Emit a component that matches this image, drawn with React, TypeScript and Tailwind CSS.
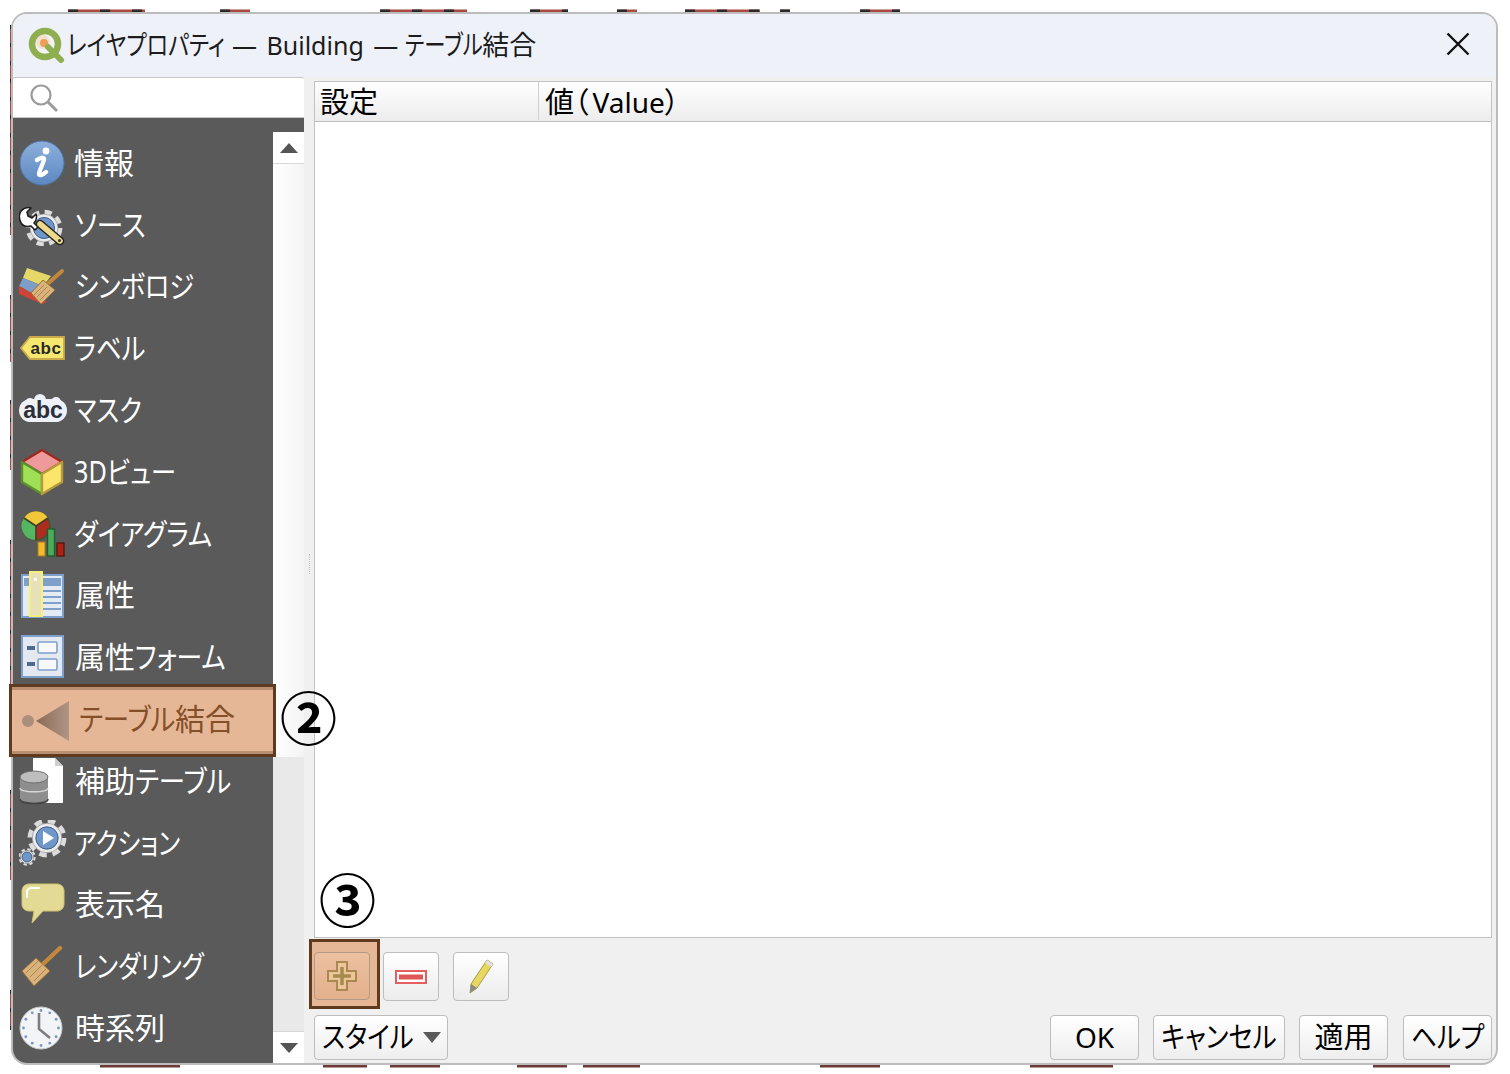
import React from "react";

function K({ w, s, children }: { w: string; s: string; children: React.ReactNode }) {
  return (
    <span className={`inline-block ${w}`}>
      <span className={`inline-block origin-left whitespace-nowrap ${s}`}>{children}</span>
    </span>
  );
}

const Info = () => (
  <svg width="46" height="46" viewBox="0 0 46 46">
    <defs>
      <linearGradient id="ig" x1="0" y1="0" x2="0" y2="1"><stop offset="0" stopColor="#8db0dc" /><stop offset="1" stopColor="#5c88c0" /></linearGradient>
    </defs>
    <circle cx="23" cy="23" r="22" fill="url(#ig)" stroke="#4f75a8" />
    <circle cx="27" cy="11" r="3.4" fill="#fff" />
    <path d="M18 20c3-2.5 7-3 7-1 0 3-5 12-5 15 0 2 4 1 7-2" fill="none" stroke="#fff" strokeWidth="4.4" strokeLinecap="round" />
  </svg>
);

const Gear = ({ cx, cy, r }: { cx: number; cy: number; r: number }) => (
  <g>
    <circle cx={cx} cy={cy} r={r * 0.94} fill="none" stroke="#dcdcdc" strokeWidth={r * 0.28} strokeDasharray={`${r * 0.42} ${r * 0.32}`} />
    <circle cx={cx} cy={cy} r={r * 0.82} fill="#ececec" stroke="#8a8a8a" strokeWidth="0.6" />
    <circle cx={cx} cy={cy} r={r * 0.62} fill="#6f97c9" stroke="#3f5f88" strokeWidth="1" />
  </g>
);

const Source = () => (
  <svg width="46" height="40" viewBox="0 0 46 40">
    <Gear cx={25} cy={22} r={17} />
    <path d="M2 5c3-3 7-4 10-3l-4 4 1 4 4 2 4-4c1 3 0 7-2 9l4 4-3 3-4-4C8 21 4 20 2 17 0 13 0 8 2 5z" fill="#fff" stroke="#1e1e1e" strokeWidth="1.6" strokeLinejoin="round" />
    <path d="M21 18l20 17" stroke="#222" strokeWidth="8.4" strokeLinecap="round" />
    <path d="M21 18l20 17" stroke="#ecd98a" strokeWidth="5.6" strokeLinecap="round" />
    <circle cx="40.5" cy="34.5" r="1.5" fill="#333" />
  </svg>
);

const Symbology = () => (
  <svg width="46" height="40" viewBox="0 0 46 40">
    <path d="M8 0l24 8-8 10L4 10z" fill="#e6d868" />
    <path d="M4 10l20 8-6 10L0 18z" fill="#7c9ec9" />
    <path d="M0 18l18 10 10 6-5 2L0 26z" fill="#cf4437" />
    <path d="M24 20L43 3" stroke="#c2883d" strokeWidth="4" strokeLinecap="round" />
    <path d="M12 25l12-13 12 10-14 14z" fill="#d9b27c" stroke="#9a7136" strokeWidth="1" />
    <path d="M15 27l10-10M18 29l10-10M21 32l10-10" stroke="#aa8450" strokeWidth="1" />
  </svg>
);

const LabelIcon = () => (
  <svg width="46" height="26" viewBox="0 0 46 26">
    <path d="M1 13L10 2h34v22H10z" fill="#f6e86e" stroke="#c9a94a" strokeWidth="1.8" />
    <text x="26" y="19" textAnchor="middle" fontSize="17" fontWeight="700" letterSpacing=".6" fill="#2a2a2a" fontFamily="'Liberation Sans',sans-serif">abc</text>
  </svg>
);

const MaskIcon = () => (
  <svg width="50" height="30" viewBox="0 0 50 30">
    <rect x="1" y="5" width="48" height="23" rx="11.5" fill="#eef1f8" />
    <circle cx="22" cy="6" r="6" fill="#eef1f8" />
    <circle cx="12" cy="8" r="4" fill="#eef1f8" />
    <circle cx="38" cy="8" r="5" fill="#eef1f8" />
    <text x="25" y="24" textAnchor="middle" fontSize="23" fontWeight="700" fill="#2a2f38" fontFamily="'Liberation Sans',sans-serif">abc</text>
  </svg>
);

const Cube = () => (
  <svg width="44" height="48" viewBox="0 0 44 48">
    <path d="M22 2l20 12-20 12L2 14z" fill="#ee9a9a" stroke="#9c2a20" strokeWidth="2.4" strokeLinejoin="round" />
    <path d="M2 14l20 12v20L2 34z" fill="#9fe056" stroke="#5f8f2c" strokeWidth="2.4" strokeLinejoin="round" />
    <path d="M42 14L22 26v20l20-12z" fill="#fbe66b" stroke="#b79a3a" strokeWidth="2.4" strokeLinejoin="round" />
  </svg>
);

const Diagram = () => (
  <svg width="44" height="46" viewBox="0 0 44 46">
    <circle cx="15" cy="15" r="14" fill="#ad2b1f" stroke="#3f5a2c" strokeWidth="1.6" />
    <path d="M15 15L3 7A14 14 0 0 1 27 7z" fill="#f2c83a" />
    <path d="M15 15L3 7A14 14 0 0 0 15 29z" fill="#55b561" />
    <path d="M15 15V29M15 15L3 7M15 15L27 7" stroke="#3f3f26" strokeWidth="1.6" />
    <rect x="17" y="31" width="7" height="14" fill="#f5b92e" stroke="#a67c1c" />
    <rect x="26.5" y="18" width="7" height="27" fill="#4dab5c" stroke="#1f5e2c" strokeWidth="1.4" />
    <rect x="36" y="32" width="7" height="13" fill="#a9221a" stroke="#5c1610" strokeWidth="1.4" />
  </svg>
);

const Attrs = () => (
  <svg width="44" height="48" viewBox="0 0 44 48">
    <rect x="1" y="4" width="41" height="42" fill="#e4ebf5" stroke="#7da0cc" strokeWidth="2" />
    <rect x="3" y="7" width="37" height="8" fill="#7f9fc9" />
    <path d="M16 20h24M16 26h24M16 32h24M16 38h24" stroke="#7f9fc9" strokeWidth="2" />
    <rect x="9" y="1" width="12" height="44" fill="#e8e0b8" stroke="#f6f07a" strokeWidth="2" />
    <rect x="13" y="7" width="3" height="3" fill="#fff" />
  </svg>
);

const Form = () => (
  <svg width="44" height="44" viewBox="0 0 44 44">
    <rect x="1" y="1" width="41" height="41" fill="#e4e9f1" stroke="#7da0cc" strokeWidth="2" />
    <rect x="6" y="11" width="8" height="4" fill="#4d6a93" />
    <rect x="6" y="27" width="8" height="4" fill="#4d6a93" />
    <rect x="17" y="7" width="19" height="11" rx="1.5" fill="#f6f8fb" stroke="#7da0cc" strokeWidth="1.6" />
    <rect x="17" y="24" width="19" height="11" rx="1.5" fill="#f6f8fb" stroke="#7da0cc" strokeWidth="1.6" />
  </svg>
);

const JoinIcon = () => (
  <svg width="50" height="44" viewBox="0 0 50 44">
    <defs>
      <linearGradient id="jg" x1="0" y1="0" x2="1" y2="0"><stop offset="0" stopColor="#8a6a58" /><stop offset="1" stopColor="#b09585" /></linearGradient>
    </defs>
    <circle cx="6" cy="22" r="6" fill="#ac8e7c" />
    <path d="M14 22L47 2v40z" fill="url(#jg)" />
  </svg>
);

const Aux = () => (
  <svg width="46" height="48" viewBox="0 0 46 48">
    <path d="M14 1h22l8 8v37H14z" fill="#fff" />
    <path d="M36 1l8 8h-8z" fill="#cfcfcf" />
    <path d="M1 20v22c0 6 28 6 28 0V20z" fill="#8e8e8e" />
    <path d="M1 31c0 5 28 5 28 0" fill="none" stroke="#d5d5d5" strokeWidth="1.4" />
    <ellipse cx="15" cy="20" rx="14" ry="6" fill="#bdbdbd" stroke="#6e6e6e" />
    <path d="M1 42c0 6 28 6 28 0" fill="none" stroke="#444" strokeWidth="1.6" />
  </svg>
);

const ActionIcon = () => (
  <svg width="48" height="46" viewBox="0 0 48 46">
    <Gear cx={28} cy={18} r={18} />
    <path d="M24 11l11 7-11 7z" fill="#fff" />
    <Gear cx={8} cy={37} r={8} />
  </svg>
);

const Bubble = () => (
  <svg width="44" height="42" viewBox="0 0 44 42">
    <path d="M8 1h28c4 0 7 3 7 7v13c0 4-3 7-7 7H22L11 40l2-12H8c-4 0-7-3-7-7V8c0-4 3-7 7-7z" fill="#e3da95" stroke="#cfc36d" />
    <path d="M6 14V9c0-2 2-4 4-4h8" fill="none" stroke="#fff" strokeWidth="2" strokeLinecap="round" />
  </svg>
);

const Brush = () => (
  <svg width="42" height="42" viewBox="0 0 42 42">
    <path d="M20 21L39 3" stroke="#c2883d" strokeWidth="4.4" strokeLinecap="round" />
    <path d="M1 26l14-13 14 13-16 15z" fill="#d9b27c" stroke="#9a7136" strokeWidth="1" />
    <path d="M5 28l12-12M9 32l12-12M13 36l12-12" stroke="#aa8450" strokeWidth="1" />
  </svg>
);

const Clock = () => {
  const ticks = Array.from({ length: 12 }, (_, i) => i * 30);
  return (
    <svg width="44" height="44" viewBox="0 0 44 44">
      <circle cx="22" cy="22" r="21" fill="#f2f4f8" stroke="#c8c8c8" />
      {ticks.map((a) => (
        <circle
          key={a}
          cx={22 + 17.5 * Math.sin((a * Math.PI) / 180)}
          cy={22 - 17.5 * Math.cos((a * Math.PI) / 180)}
          r="1.4"
          fill="#7b97bf"
        />
      ))}
      <path d="M20 7v16l11 9" fill="none" stroke="#7d7d7d" strokeWidth="2.6" />
    </svg>
  );
};

const Logo = () => (
  <svg width="38" height="36" viewBox="0 0 38 36">
    <circle cx="17" cy="17" r="13" fill="#f1f4f6" stroke="#8fae4f" strokeWidth="6.5" />
    <circle cx="15" cy="15" r="7" fill="#f6c9a0" opacity=".45" />
    <circle cx="16" cy="16" r="4" fill="#ef9f55" />
    <path d="M20 20L33 33" stroke="#8fae4f" strokeWidth="6" strokeLinecap="round" />
  </svg>
);

type R = { key: string; label: React.ReactNode; icon: React.ReactNode; pl: string; gap: string };

const rows: R[] = [
  { key: "a", label: "情報", icon: <Info />, pl: "pl-[6px]", gap: "w-[55px]" },
  { key: "b", label: <K w="w-[70px]" s="scale-x-[.886]">ソース</K>, icon: <Source />, pl: "pl-[6px]", gap: "w-[56px] pt-[2px]" },
  { key: "c", label: <K w="w-[119px]" s="scale-x-[.838]">シンボロジ</K>, icon: <Symbology />, pl: "pl-[6px]", gap: "w-[56px] pt-[3px]" },
  { key: "d", label: <K w="w-[70px]" s="scale-x-[.843]">ラベル</K>, icon: <LabelIcon />, pl: "pl-[7px]", gap: "w-[54px]" },
  { key: "e", label: <K w="w-[67px]" s="scale-x-[.84]">マスク</K>, icon: <MaskIcon />, pl: "pl-[5px]", gap: "w-[56px] pb-[3px]" },
  { key: "f", label: <K w="w-[100px]" s="scale-x-[.84]">3Dビュー</K>, icon: <Cube />, pl: "pl-[7px]", gap: "w-[54px]" },
  { key: "g", label: <K w="w-[137px]" s="scale-x-[.86]">ダイアグラム</K>, icon: <Diagram />, pl: "pl-[8px]", gap: "w-[53px]" },
  { key: "h", label: "属性", icon: <Attrs />, pl: "pl-[8px]", gap: "w-[54px]" },
  { key: "i", label: <>属性<K w="w-[91px]" s="scale-x-[.86]">フォーム</K></>, icon: <Form />, pl: "pl-[8px]", gap: "w-[54px]" },
];
const rows2: R[] = [
  { key: "j", label: <>補助<K w="w-[96px]" s="scale-x-[.88]">テーブル</K></>, icon: <Aux />, pl: "pl-[6px]", gap: "w-[56px]" },
  { key: "k", label: <K w="w-[106px]" s="scale-x-[.815]">アクション</K>, icon: <ActionIcon />, pl: "pl-[6px]", gap: "w-[55px]" },
  { key: "l", label: "表示名", icon: <Bubble />, pl: "pl-[8px]", gap: "w-[54px]" },
  { key: "m", label: <K w="w-[130px]" s="scale-x-[.81]">レンダリング</K>, icon: <Brush />, pl: "pl-[8px]", gap: "w-[54px]" },
  { key: "n", label: "時系列", icon: <Clock />, pl: "pl-[6px]", gap: "w-[56px]" },
];

function Row({ r }: { r: R }) {
  return (
    <div className={`flex h-[61.8px] items-center ${r.pl}`}>
      <div className={`flex shrink-0 items-center ${r.gap}`}>{r.icon}</div>
      <span className="whitespace-nowrap text-[30px] leading-none text-white">{r.label}</span>
    </div>
  );
}

function Btn({ children, w }: { children: React.ReactNode; w: string }) {
  return (
    <div className={`flex h-[45px] ${w} items-center justify-center rounded-[4px] border border-[#bdbdbd] bg-gradient-to-b from-white to-[#eeeeee] pb-[2px] text-[29px] leading-none text-black`}>
      {children}
    </div>
  );
}

function ToolBtn({ children }: { children: React.ReactNode }) {
  return (
    <div className="flex h-[49px] w-[56px] items-center justify-center rounded-[4px] border border-[#bdbdbd] bg-gradient-to-b from-white to-[#ececec]">
      {children}
    </div>
  );
}

const red = "M40 11H40M68 11H145M220 11H250M380 11H467M530 11H568M617 11H637M685 11H760M780 11H790M860 11H900";

export default function App() {
  return (
    <div className="relative h-[1074px] w-[1510px] overflow-hidden bg-white pl-[11px] pt-[12px] font-['Noto_Sans','Noto_Sans_CJK_JP',sans-serif] [font-feature-settings:'palt']">
      <svg className="absolute left-0 top-0" width="1510" height="1074" viewBox="0 0 1510 1074">
        <g fill="none" strokeWidth="3">
          <path d="M11.5 25V235M11.5 295V362M11.5 400V470M11.5 540V700M11.5 790V880M11.5 990V1030" stroke="#a84a42" />
          <path d="M11.5 25V235M11.5 295V362M11.5 400V470M11.5 540V700M11.5 790V880M11.5 990V1030" stroke="#2a2a2a" strokeDasharray="4 14" />
          <path d={red} stroke="#a84a42" />
          <path d={red} stroke="#2a2a2a" strokeDasharray="10 22" />
          <path d="M100 1066H180M323 1066H367M390 1066H440M517 1066H567M583 1066H640M820 1066H880M1030 1066H1113M1373 1066H1450" stroke="#6d3a36" />
        </g>
      </svg>
      <div className="relative flex h-[1053px] w-[1487px] flex-col rounded-[16px] border-2 border-[#bcbcbc] bg-[#f0f0f0]">
        <div className="flex h-[63px] shrink-0 items-center rounded-t-[14px] bg-[#eef2f8] pb-[2px] pl-[15px] pr-[26px] text-[27px] leading-none text-[#1c1c1c]">
          <Logo />
          <span className="ml-[1px] whitespace-nowrap">
            <K w="w-[158px]" s="scale-x-[.82]">レイヤプロパティ</K>
            <span className="mx-[7px] text-[25px] [word-spacing:3px]">— Building —</span>
            <K w="w-[77px]" s="scale-x-[.79]">テーブル</K>結合
          </span>
          <svg className="mb-[2px] ml-auto" width="24" height="24" viewBox="0 0 24 24">
            <path d="M1.5 1.5L22.5 22.5M22.5 1.5L1.5 22.5" stroke="#111" strokeWidth="2.4" />
          </svg>
        </div>
        <div className="flex min-h-0 flex-1">
          <div className="flex w-[291px] shrink-0 flex-col">
            <div className="flex h-[41px] shrink-0 items-center rounded-t-[2px] border-y border-[#c6c6c6] bg-white pl-[16px]">
              <svg width="30" height="30" viewBox="0 0 30 30">
                <circle cx="12" cy="12" r="9.5" fill="none" stroke="#9a9a9a" strokeWidth="2.2" />
                <path d="M19 19l9 9" stroke="#9a9a9a" strokeWidth="3" />
              </svg>
            </div>
            <div className="h-[14px] shrink-0 bg-[#5a5a5a]" />
            <div className="flex min-h-0 flex-1">
              <div className="relative w-[260px] shrink-0 rounded-bl-[14px] bg-[#5a5a5a]">
                {rows.map((r) => (
                  <Row key={r.key} r={r} />
                ))}
                <div className="relative h-[61.8px]">
                  <div className="absolute bottom-[-7px] left-[-4px] right-[-3px] top-[-4px] z-10 flex items-center border-[3px] border-[#5f3a1e] bg-[#e6b796] pl-[10px] shadow-[inset_0_3px_0_#b98f70,inset_0_-3px_0_#b98f70]">
                    <JoinIcon />
                    <span className="mb-[3px] ml-[7px] whitespace-nowrap text-[30px] leading-none text-[#835029]">
                      <K w="w-[96px]" s="scale-x-[.88]">テーブル</K>結合
                    </span>
                  </div>
                </div>
                {rows2.map((r) => (
                  <Row key={r.key} r={r} />
                ))}
              </div>
              <div className="flex w-[31px] shrink-0 flex-col bg-[#e9e9e9]">
                <div className="flex h-[32px] shrink-0 items-center justify-center border-b border-[#d6d6d6] bg-white">
                  <svg width="18" height="10" viewBox="0 0 18 10"><path d="M9 0l9 10H0z" fill="#555" /></svg>
                </div>
                <div className="h-[593px] shrink-0 bg-gradient-to-r from-white to-[#f4f4f4]" />
                <div className="flex-1" />
                <div className="flex h-[32px] shrink-0 items-center justify-center border-t border-[#d6d6d6] bg-white">
                  <svg width="18" height="10" viewBox="0 0 18 10"><path d="M9 10L18 0H0z" fill="#555" /></svg>
                </div>
              </div>
            </div>
          </div>
          <div className="flex w-[10px] shrink-0 items-center justify-center">
            <div className="mb-[12px] h-[20px] border-l border-dotted border-[#c4c4c4]" />
          </div>
          <div className="flex min-w-0 flex-1 flex-col pr-[4px] pt-[4px]">
            <div className="flex min-h-0 flex-1 flex-col border border-[#c2c2c2] bg-white">
              <div className="flex h-[40px] shrink-0 items-center border-b border-[#bdbdbd] bg-gradient-to-b from-white to-[#ececec] pb-[1px] text-[29px] leading-none text-black">
                <div className="flex h-full w-[224px] items-center border-r border-[#d0d0d0] pl-[5px]">設定</div>
                <div className="whitespace-nowrap pl-[6px]">値（<span className="ml-[4px] text-[28px]">Value</span>）</div>
              </div>
              <div className="flex-1" />
            </div>
            <div className="flex h-[125px] shrink-0 flex-col">
              <div className="flex gap-[13px] pt-[14px]">
                <ToolBtn>
                  <svg width="34" height="34" viewBox="0 0 34 34"><path d="M12 3h10v9h9v10h-9v9H12v-9H3V12h9z" fill="#f0d4a8" stroke="#a88a50" strokeWidth="2" /><path d="M17 8v18M8 17h18" stroke="#a88a50" strokeWidth="3.5" /></svg>
                </ToolBtn>
                <ToolBtn>
                  <svg width="32" height="14" viewBox="0 0 32 14"><rect x="1" y="1" width="30" height="12" fill="#fff" stroke="#e46060" strokeWidth="2" /><rect x="4" y="4.5" width="24" height="5" fill="#e05555" /></svg>
                </ToolBtn>
                <div className="ml-px">
                  <ToolBtn>
                    <svg width="28" height="38" viewBox="0 0 28 38"><path d="M20 2l6 4L10 30l-7 5 1-9z" fill="#e6d860" stroke="#a89c40" strokeWidth="1" /><path d="M20 2l6 4-2 3-6-4z" fill="#e0e0e0" /><path d="M3 35l1-9 6 4z" fill="#8a8a8a" /></svg>
                  </ToolBtn>
                </div>
              </div>
              <div className="mt-[14px] flex items-center">
                <div className="flex h-[45px] w-[134px] items-center rounded-[4px] border border-[#bdbdbd] bg-gradient-to-b from-white to-[#eeeeee] pb-[2px] pl-[7px] text-[29px] leading-none text-black">
                  <K w="w-[91px]" s="scale-x-[.88]">スタイル</K>
                  <svg className="ml-[10px] mt-[2px]" width="18" height="11" viewBox="0 0 18 11"><path d="M0 0h18L9 11z" fill="#5a5a5a" /></svg>
                </div>
                <div className="ml-auto mr-px flex gap-[14px]">
                  <Btn w="w-[89px]"><span className="text-[28px]">OK</span></Btn>
                  <Btn w="w-[132px]"><K w="w-[117px]" s="scale-x-[.88]">キャンセル</K></Btn>
                  <Btn w="w-[89px]">適用</Btn>
                  <div className="ml-px mr-[-1px]">
                    <Btn w="w-[89px]"><span className="mr-[2px]"><K w="w-[72px]" s="scale-x-[.88]">ヘルプ</K></span></Btn>
                  </div>
                </div>
              </div>
            </div>
          </div>
        </div>
        <div className="absolute left-[267px] top-[676px] z-20 text-[57px] font-bold leading-none text-black">②</div>
        <div className="absolute left-[306px] top-[858px] z-20 text-[57px] font-bold leading-none text-black">③</div>
        <div className="absolute left-[296px] top-[925px] z-20 flex h-[70px] w-[71px] items-start border-[3px] border-[#5f3a1e] bg-[#e6b796] pl-[2px] pt-[10px]">
          <div className="flex h-[48px] w-[56px] items-center justify-center rounded-[4px] border border-[#b39a88] bg-gradient-to-b from-[#ecc0a0] to-[#e3b08c]">
            <svg width="34" height="34" viewBox="0 0 34 34"><path d="M12 3h10v9h9v10h-9v9H12v-9H3V12h9z" fill="#eec49a" stroke="#a88a50" strokeWidth="2" /><path d="M17 8v18M8 17h18" stroke="#a88a50" strokeWidth="3.5" /></svg>
          </div>
        </div>
      </div>
    </div>
  );
}
